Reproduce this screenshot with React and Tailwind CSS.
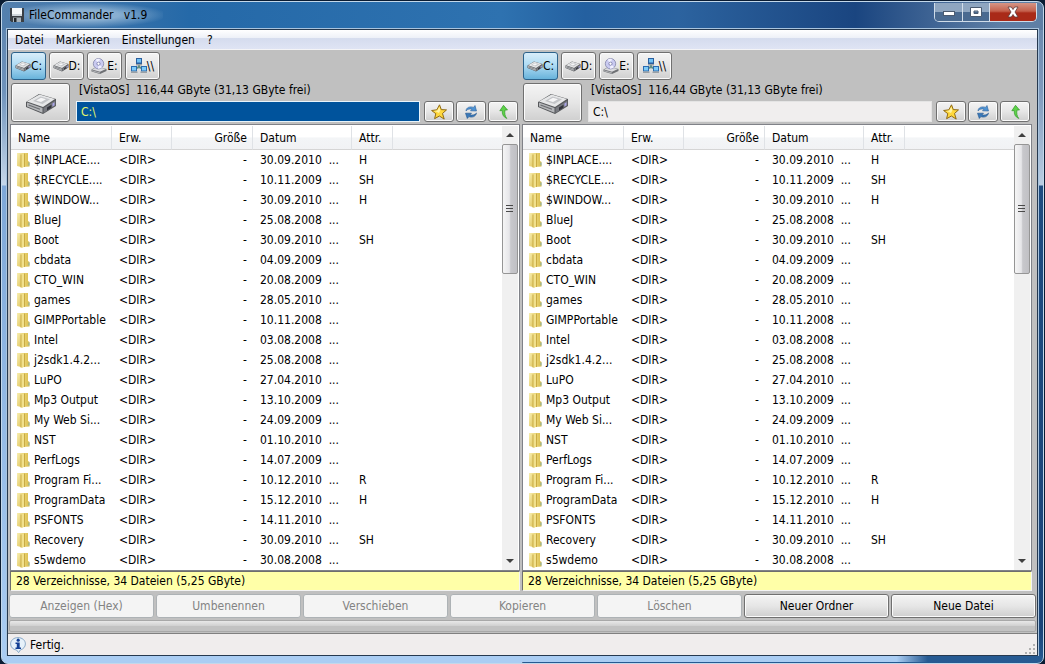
import { useState } from 'react'

const FILES = [
  ['$INPLACE....', '30.09.2010', 'H'],
  ['$RECYCLE....', '10.11.2009', 'SH'],
  ['$WINDOW...', '30.09.2010', 'H'],
  ['BlueJ', '25.08.2008', ''],
  ['Boot', '30.09.2010', 'SH'],
  ['cbdata', '04.09.2009', ''],
  ['CTO_WIN', '20.08.2009', ''],
  ['games', '28.05.2010', ''],
  ['GIMPPortable', '10.11.2008', ''],
  ['Intel', '03.08.2008', ''],
  ['j2sdk1.4.2...', '25.08.2008', ''],
  ['LuPO', '27.04.2010', ''],
  ['Mp3 Output', '13.10.2009', ''],
  ['My Web Si...', '24.09.2009', ''],
  ['NST', '01.10.2010', ''],
  ['PerfLogs', '14.07.2009', ''],
  ['Program Fi...', '10.12.2010', 'R'],
  ['ProgramData', '15.12.2010', 'H'],
  ['PSFONTS', '14.11.2010', ''],
  ['Recovery', '30.09.2010', 'SH'],
  ['s5wdemo', '30.08.2008', ''],
]

const ACTIONS = [
  { label: 'Anzeigen (Hex)', enabled: false },
  { label: 'Umbenennen', enabled: false },
  { label: 'Verschieben', enabled: false },
  { label: 'Kopieren', enabled: false },
  { label: 'Löschen', enabled: false },
  { label: 'Neuer Ordner', enabled: true },
  { label: 'Neue Datei', enabled: true },
]

const DRIVES = [
  { label: 'C:', icon: DriveIcon },
  { label: 'D:', icon: DriveIcon },
  { label: 'E:', icon: CdIcon },
  { label: '\\\\', icon: NetworkIcon },
]

const buttonLook =
  'border border-[#707070] rounded-[3px] bg-linear-to-b from-[#f4f4f4] from-0% via-[#e6e6e6] via-50% to-[#cfcfcf] shadow-[inset_0_0_0_1px_#fbfbfb]'

function FloppyIcon() {
  return (
    <svg className="w-4 h-4 shrink-0" viewBox="0 0 16 16">
      <path d="M1 1h14v14H2.500L1 13.500z" fill="#3a3f45" />
      <rect x="3" y="1" width="10" height="8" fill="#f4f7f9" />
      <rect x="3" y="7" width="10" height="2" fill="#cfd6dc" />
      <rect x="4" y="10.500" width="8" height="4.500" fill="#aab3ba" />
      <rect x="5" y="11" width="2.500" height="4" fill="#23272b" />
    </svg>
  )
}

function DriveIcon({ className = 'w-4 h-4' }) {
  return (
    <svg className={`${className} shrink-0`} viewBox="0 0 32 32">
      <path d="M1 15 14 7l17 5v7L18 27 1 20z" fill="#55575a" />
      <path d="M2 14.500 14.500 7.500 30 12 18 20z" fill="#e6e7e8" />
      <path d="M8 14 15.500 9.500 25 12.300 17.500 17z" fill="#c3c5c8" />
      <path d="M11 13.500 16 10.700l5 1.500-5 2.800z" fill="#f6f6f7" />
      <path d="M2 15.500 17.500 21v4.800L2 19.600z" fill="#b4b6b9" />
      <path d="M3.500 18 15 22.200" stroke="#6a6c70" strokeWidth="1.200" />
      <path d="M18.500 21 30.300 13.500v5L18.500 26z" fill="#77797f" />
      <path d="M22 20.500 26.500 17.700v3L22 23.500z" fill="#33343c" />
      <path d="M27.500 16.500 29.500 15.300v3l-2 1.200z" fill="#a9a3e8" />
    </svg>
  )
}

function CdIcon() {
  return (
    <svg className="w-4 h-4 shrink-0" viewBox="0 0 16 16">
      <path d="M.5 11.500 6 8.500l9.500 2.500v2L9 16l-8.500-2.500z" fill="#6e7074" />
      <path d="M1 11.500 6 9l9 2-6 2.700z" fill="#dcdde0" />
      <path d="M1 12.300 9 14.500v1l-8-2.200z" fill="#b4b6ba" />
      <circle cx="7.500" cy="5.700" r="5.200" fill="#c9caf0" stroke="#8385a8" strokeWidth=".8" />
      <path d="M7.500 5.700 4.500 1.700a5 5 0 0 1 4.500-.8zM7.500 5.700l3.500 3.500a5 5 0 0 1-4 1.400z" fill="#f1f1ff" />
      <circle cx="7.500" cy="5.700" r="1.600" fill="#fff" stroke="#7173a5" strokeWidth=".8" />
    </svg>
  )
}

function NetworkIcon() {
  return (
    <svg className="w-4 h-4 shrink-0" viewBox="0 0 16 16">
      <path d="M8 6v4M3 11l5-2 5 2" stroke="#5f8f86" strokeWidth="2" fill="none" />
      <path d="M5 0h6v6H5z" fill="#2b5f9e" />
      <path d="M6 1h4v3.500H6z" fill="#6fc0f4" />
      <path d="M5 6h6v1.500H5z" fill="#9aa0a6" />
      <path d="M0 8h6v5.500H0z" fill="#2b6cb0" />
      <path d="M1 9h4v3.500H1z" fill="#7fcbf8" />
      <path d="M0 13.500h6.500V15H0z" fill="#9aa0a6" />
      <path d="M10 8h6v5.500h-6z" fill="#2b6cb0" />
      <path d="M11 9h4v3.500h-4z" fill="#7fcbf8" />
      <path d="M9.500 13.500H16V15H9.500z" fill="#9aa0a6" />
    </svg>
  )
}

function FolderIcon() {
  return (
    <svg className="w-4 h-4 shrink-0" viewBox="0 0 16 16">
      <defs>
        <linearGradient id="folderFront" x1="0" x2="1" y1="0" y2="1">
          <stop offset="0" stopColor="#f8efb2" />
          <stop offset="1" stopColor="#dcbf52" />
        </linearGradient>
        <linearGradient id="folderSide" x1="0" x2="1">
          <stop offset="0" stopColor="#ecd87c" />
          <stop offset="1" stopColor="#d9bb48" />
        </linearGradient>
      </defs>
      <path d="M7 1h5v8l1.500 1v4.500L7 15z" fill="url(#folderSide)" />
      <path d="M1 1h6v14.500L1 14z" fill="url(#folderFront)" />
      <path d="M5 2.500 8 1.500V15l-3 .7z" fill="#f1e08c" />
      <path d="M5 2.500v13M8.500 1.500V15" stroke="#c9ab45" strokeWidth="1" />
      <path d="M13 10.500v3" stroke="#7fb0b0" strokeWidth="1" />
    </svg>
  )
}

function StarIcon() {
  return (
    <svg className="w-4 h-4" viewBox="0 0 16 16">
      <path
        d="M8.500 .8 10.300 5.600l5.200.3-4 3.600 1.700 5.600L8.400 12 3.600 14.700l1.200-5L.6 6.500l5.300-.7z"
        fill="#ffd83c"
        stroke="#8f6a14"
        strokeWidth="1"
        strokeLinejoin="round"
      />
      <path d="M8.300 2.800 9.300 6.500 8 9 5 7.400 3 6.900l3.300-.5z" fill="#fff3a6" />
    </svg>
  )
}

function RefreshIcon() {
  return (
    <svg className="w-4 h-4" viewBox="0 0 16 16">
      <path d="M3 7C3 3.500 7 2 10.500 3.400L12 1.500 13.500 7 7.500 6.800 9 5.300C7 4.600 4.500 5 3 7z" fill="#4f93d3" stroke="#2a5f9c" strokeWidth=".6" />
      <path d="M13.500 9C13 12.500 9 14 6 12.600L4.300 14.500 2.500 9.200 8.500 9.200 7 10.800C9 11.400 12 11 13.500 9z" fill="#3a78b8" stroke="#24558d" strokeWidth=".6" />
    </svg>
  )
}

function UpIcon() {
  return (
    <svg className="w-4 h-4" viewBox="0 0 16 16">
      <path d="M8.500 1.300 12.500 6H10C9.500 9.500 9.800 12 11.800 14.500 8.500 13 7 10.500 7.200 6.500L4.800 6.800z" fill="#5fd24a" stroke="#2f9a27" strokeWidth=".7" strokeLinejoin="round" />
    </svg>
  )
}

function InfoIcon() {
  return (
    <svg className="w-4 h-4 shrink-0" viewBox="0 0 16 16">
      <path d="M8 .6c4.300 0 7.400 2.800 7.400 6.300 0 3-2.200 5.300-5 6L8.600 15.600 6.500 13C3 12.600.6 10 .6 6.900.6 3.400 3.700.6 8 .6z" fill="#e6f1fa" stroke="#7fa2c2" strokeWidth=".9" />
      <circle cx="8.200" cy="3.200" r="1.600" fill="#123f94" />
      <path d="M5.500 5.500h4.200v5h1.300v1.500H5.500v-1.500h1.300V7H5.500z" fill="#123f94" />
    </svg>
  )
}

function TitleBar() {
  const cell = 'h-[18px] flex items-center justify-center'
  return (
    <header className="h-[26px] flex items-start justify-between pl-[2px]">
      <div className="flex items-center gap-1 h-6 pr-4 bg-[radial-gradient(ellipse_at_center,rgba(190,215,235,0.6)_30%,transparent_75%)]">
        <FloppyIcon />
        <h1 className="whitespace-pre">{'FileCommander   v1.9'}</h1>
      </div>
      <div className="flex mr-px border border-t-0 border-[#cfdce9] rounded-b-[5px] overflow-hidden">
        <button aria-label="Minimieren" className={`${cell} w-7 border-r border-[#d3deea] bg-linear-to-b from-[#8fa6c0] from-50% to-[#4a6a90] to-50%`}>
          <svg className="w-3 h-3" viewBox="0 0 12 12">
            <rect x=".5" y="5.500" width="11" height="4" fill="#fff" stroke="#4b5b70" />
          </svg>
        </button>
        <button aria-label="Maximieren" className={`${cell} w-[27px] border-r border-[#d3deea] bg-linear-to-b from-[#8fa6c0] from-50% to-[#4a6a90] to-50%`}>
          <svg className="w-3 h-3" viewBox="0 0 12 12">
            <path d="M.5 1.500h11v9H.5zM4 5h4v2.500H4z" fill="#fff" fillRule="evenodd" stroke="#4b5b70" />
          </svg>
        </button>
        <button aria-label="Schließen" className={`${cell} w-[46px] bg-linear-to-b from-[#d59586] from-0% via-[#c4604c] via-45% to-[#a92a18] to-55%`}>
          <svg className="w-3 h-3" viewBox="0 0 12 12">
            <path d="M1 1h3.300L6 3.500 7.700 1H11L8 6l3 5H7.700L6 8.500 4.300 11H1l3-5z" fill="#fff" stroke="#5e3a3a" strokeWidth=".8" />
          </svg>
        </button>
      </div>
    </header>
  )
}

function MenuBar() {
  return (
    <nav className="h-5 flex items-center gap-3 px-[7px] border-b border-[#f4f4f6] bg-[linear-gradient(#ffffff,#eef1f8_40%,#d5dcee_45%,#dfe4f4)]">
      <button>Datei</button>
      <button>Markieren</button>
      <button>Einstellungen</button>
      <button>?</button>
    </nav>
  )
}

function ScrollBar() {
  return (
    <div className="w-4 shrink-0 flex flex-col bg-[#f0f0f0]">
      <button aria-label="Nach oben" className="h-[18px] flex items-center justify-center">
        <svg className="w-2 h-1" viewBox="0 0 8 4">
          <path d="M0 4 4 0l4 4z" fill="#404040" />
        </svg>
      </button>
      <div className="h-[130px] flex items-center justify-center border border-[#959595] rounded-[2px] bg-[linear-gradient(90deg,#f5f5f5,#e6e6e9_45%,#c8c8cc_55%,#c0c0c4)]">
        <svg className="w-2 h-2" viewBox="0 0 8 8">
          <path d="M0 .5h7M0 3.500h7M0 6.500h7" stroke="#4a4a4a" />
        </svg>
      </div>
      <div className="flex-1" />
      <button aria-label="Nach unten" className="h-[18px] flex items-center justify-center">
        <svg className="w-2 h-1" viewBox="0 0 8 4">
          <path d="M0 0 4 4l4-4z" fill="#404040" />
        </svg>
      </button>
    </div>
  )
}

function FileTable() {
  const head = 'p-0 pl-[7px] font-normal border-r border-[#dfe2e6]'
  return (
    <div className="flex border border-[#808288] bg-white pt-px pr-px">
      <div className="flex-1 min-w-0">
        <table className="w-full table-fixed border-separate border-spacing-0 text-left whitespace-pre">
          <colgroup>
            <col className="w-[101px]" />
            <col className="w-[60px]" />
            <col className="w-[81px]" />
            <col className="w-[99px]" />
            <col className="w-[41px]" />
            <col />
          </colgroup>
          <thead>
            <tr className="h-6 bg-[linear-gradient(#ffffff_45%,#f3f5f7_50%,#f1f2f4)] [&>th]:border-b [&>th]:border-b-[#d5d5d5]">
              <th className={head}>Name</th>
              <th className={head}>Erw.</th>
              <th className={`${head} text-right pr-[5px]`}>Größe</th>
              <th className={head}>Datum</th>
              <th className={head}>Attr.</th>
              <th className="p-0"></th>
            </tr>
          </thead>
          <tbody>
            {FILES.map(([name, date, attr]) => (
              <tr key={name} className="h-5">
                <td className="p-0 pl-[5px]">
                  <div className="flex items-center gap-[2px]">
                    <FolderIcon />
                    {name}
                  </div>
                </td>
                <td className="p-0 pl-[7px]">&lt;DIR&gt;</td>
                <td className="p-0 pr-[6px] text-right">-</td>
                <td className="p-0 pl-[7px]">{`${date}  ...`}</td>
                <td className="p-0 pl-[7px]">{attr}</td>
                <td className="p-0"></td>
              </tr>
            ))}
          </tbody>
        </table>
      </div>
      <ScrollBar />
    </div>
  )
}

function Panel({ side, active }) {
  const [drive, setDrive] = useState('C:')
  const [path, setPath] = useState('C:\\')

  return (
    <section className="flex-1 min-w-0">
      <div className="flex gap-[3px] pl-px pt-[2px]">
        {DRIVES.map(({ label, icon: Icon }) => (
          <button
            key={label}
            onClick={() => setDrive(label)}
            className={`h-7 w-[35px] shrink-0 flex items-center justify-center ${
              drive === label
                ? 'border border-[#2c628b] rounded-[3px] bg-linear-to-b from-[#d8edf9] from-0% via-[#b0dcf4] via-45% to-[#68b3db]'
                : buttonLook
            }`}
          >
            <Icon />
            {label}
          </button>
        ))}
      </div>

      <div className="flex items-end pl-px pr-[2px] pt-[2px]">
        <button aria-label="Laufwerk" className={`w-[59px] h-[39px] mr-[6px] flex items-center justify-center ${buttonLook}`}>
          <DriveIcon className="w-8 h-8" />
        </button>
        <div className="flex-1 min-w-0">
          <label htmlFor={`path-${side}`} className="block h-[19px] pl-[3px] leading-[16px] whitespace-pre">
            {'[VistaOS]  116,44 GByte (31,13 GByte frei)'}
          </label>
          <input
            id={`path-${side}`}
            value={path}
            onChange={(e) => setPath(e.target.value)}
            className={`block w-full h-[21px] px-1 border outline-none ${
              active ? 'bg-[#00539c] text-[#e4f76a] border-[#e8f4fb]' : 'bg-[#f0eeee] border-[#e4e4e4]'
            }`}
          />
        </div>
        <div className="flex gap-[2px] pl-1">
          <button aria-label="Favoriten" className={`w-[30px] h-[21px] flex items-center justify-center ${buttonLook}`}><StarIcon /></button>
          <button aria-label="Aktualisieren" className={`w-[30px] h-[21px] flex items-center justify-center ${buttonLook}`}><RefreshIcon /></button>
          <button aria-label="Übergeordneter Ordner" className={`w-[30px] h-[21px] flex items-center justify-center ${buttonLook}`}><UpIcon /></button>
        </div>
      </div>

      <div className="pt-[2px]">
        <FileTable />
      </div>
      <p className="h-5 px-[5px] leading-[18px] bg-[#ffffa8] border border-t-[#6e6e6e] border-l-[#6e6e6e] border-r-[#f4f4f4] border-b-[#f4f4f4]">
        28 Verzeichnisse, 34 Dateien (5,25 GByte)
      </p>
    </section>
  )
}

export default function App() {
  return (
    <div className="min-h-screen flex flex-col bg-[#0a1c33] text-xs text-black font-['DejaVu_Sans_Condensed','DejaVu_Sans',sans-serif]">
      <div className="flex-1 flex flex-col mt-px mx-px p-px rounded-[7px] border border-[#c3d8ea] overflow-hidden [background:linear-gradient(90deg,#5480ae,#2569a8_18%,#2e72b0_48%,#2460a0_56%,#2c639f_65%,#1a4580_82%,#5f7fa5_96%)_0_0/100%_28px_no-repeat,linear-gradient(#5a82ae,#6f93bb_90px,#c5d7ea_183px,#7ea8d8_184px,#aacdf3)_0_0/50%_100%_no-repeat,linear-gradient(#6583a8,#7f9abd_90px,#b9cde2_183px,#1f4c80_184px,#1c4579_95%,#265a92)_100%_0/50%_100%_no-repeat]">
        <div className="flex-1 flex flex-col px-1">
          <TitleBar />
          <main className="flex-1 flex flex-col border border-[#26394f] outline outline-[#a9c4de] bg-[#c0c0c0]">
            <MenuBar />
            <div className="flex gap-[2px] pl-[2px] pr-[5px]">
              <Panel side="left" active />
              <Panel side="right" />
            </div>

            <div className="flex gap-[2px] pt-[3px] px-px pb-[2px]">
              {ACTIONS.map(({ label, enabled }) => (
                <button
                  key={label}
                  disabled={!enabled}
                  className={`flex-1 h-6 ${
                    enabled ? buttonLook : 'border border-[#adb2b5] rounded-[3px] bg-[#f4f4f4] text-[#838383]'
                  }`}
                >
                  {label}
                </button>
              ))}
            </div>

            <div className="h-3 mx-px mb-px border border-[#a8a8a8] rounded-[2px] bg-linear-to-b from-[#e8e8e8] from-0% via-[#d2d2d2] via-45% to-[#c2c2c2] to-50%" />

            <footer className="flex-1 min-h-[22px] flex items-center justify-between border-t border-[#808080] bg-[#f0eded] pl-[2px]">
              <div className="flex items-center gap-1">
                <InfoIcon />
                Fertig.
              </div>
              <svg className="w-3 h-3 self-end" viewBox="0 0 12 12" fill="#b0b0b0">
                <path d="M8 1h2v2H8zM8 5h2v2H8zM8 9h2v2H8zM4 5h2v2H4zM4 9h2v2H4zM0 9h2v2H0z" />
              </svg>
            </footer>
          </main>
          <div className="h-[6px] -mx-1 bg-[linear-gradient(90deg,#aacdf3_86%,#265a92_89%)]" />
        </div>
      </div>
    </div>
  )
}
